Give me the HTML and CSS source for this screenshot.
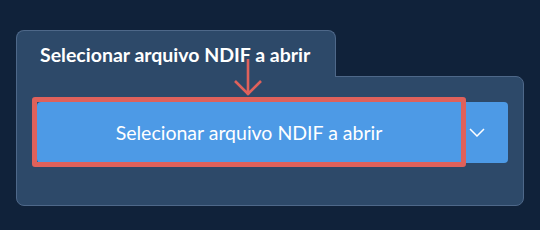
FILE: index.html
```html
<!DOCTYPE html>
<html lang="en">
    <head>
        <meta charset="UTF-8">
        <meta name="viewport" content="width=device-width, initial-scale=1.0">
        <title>Selecionar arquivo</title>
        <link rel="stylesheet" href="styles.css">
    </head>
    <body>
        <div class="panel">
            <div class="panel-tab">Selecionar arquivo NDIF a abrir</div>
            <div class="panel-body">
                <div class="split-button">
                    <button type="button" class="btn-main">Selecionar arquivo NDIF a abrir</button>
                    <button type="button" class="btn-toggle">
                        <svg width="16" height="9" viewBox="0 0 16 9"><path d="M1 1 L8 8 L15 1" fill="none" stroke="#fff" stroke-width="1.5"/></svg>
                    </button>
                    <span class="highlight"></span>
                    <svg class="pointer" width="30" height="40" viewBox="0 0 30 40"><path d="M15 0 V36 M2 22 L15 35 L28 22" fill="none" stroke="#df615b" stroke-width="2.6"/></svg>
                </div>
            </div>
        </div>
    </body>
</html>
```

FILE: styles.css
```css
body { margin: 0; background: #10223a; font-family: Lato, "Open Sans", sans-serif; }
.panel { padding: 30px 0 0 16px; }
.panel-tab { position: relative; z-index: 1; box-sizing: border-box; width: 320px; height: 47px; margin-bottom: -1px; padding: 12px 0 0 23px; background: #2d4969; border: 1px solid #4e6889; border-bottom: none; border-radius: 8px 8px 0 0; color: #fff; font-size: 19.5px; font-weight: 700; line-height: 24px; }
.panel-body { box-sizing: border-box; width: 508px; height: 130px; padding: 25px 15px 0 20px; background: #2d4969; border: 1px solid #4e6889; border-radius: 0 8px 8px 8px; }
.split-button { position: relative; display: flex; height: 61px; }
.split-button button { border: none; background: #4d9ae6; color: #fff; font-family: inherit; cursor: pointer; }
.btn-main { width: 424px; font-size: 19.5px; border-radius: 4px 0 0 4px; }
.btn-toggle { width: 47px; display: flex; align-items: center; justify-content: center; padding: 0 15px 0 0; border-radius: 0 4px 4px 0; }
.highlight { position: absolute; left: -5px; top: -5px; width: 434px; height: 70px; box-sizing: border-box; border: 5px solid #df615b; border-radius: 3px; }
.pointer { position: absolute; z-index: 2; left: 196px; top: -43px; }
```
